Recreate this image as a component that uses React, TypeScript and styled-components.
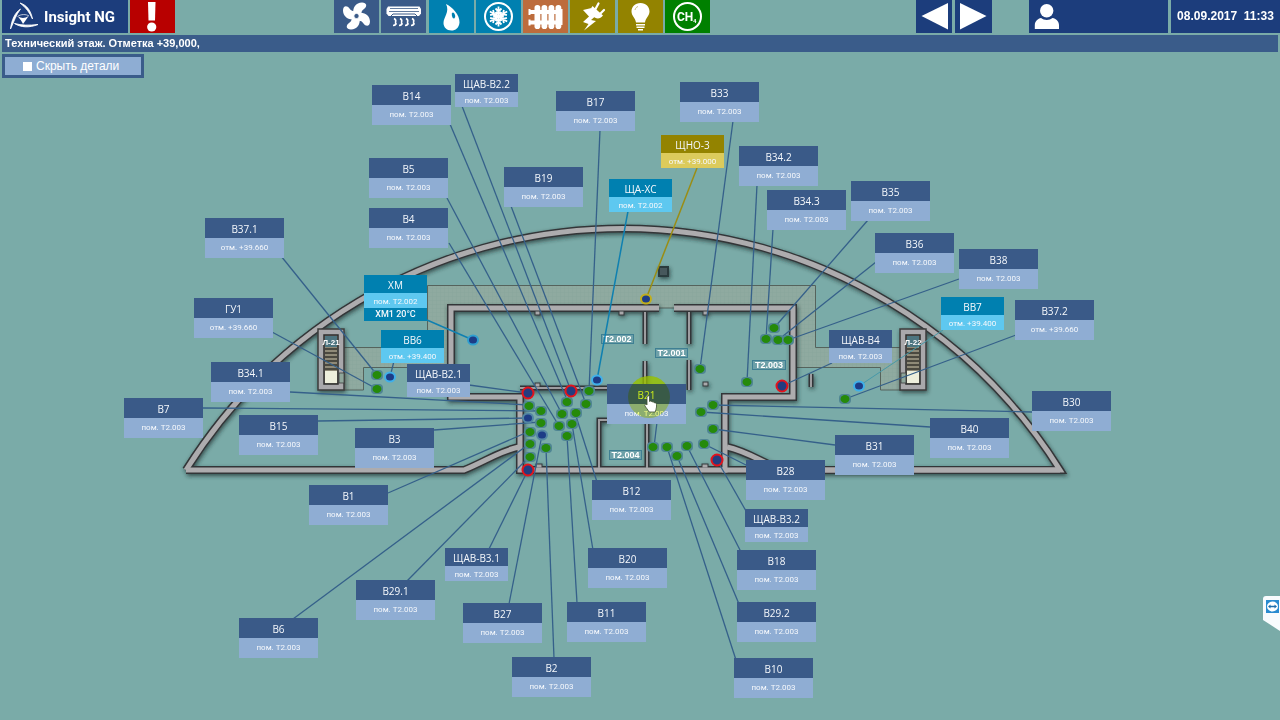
import React from "react";
import styled, { createGlobalStyle } from "styled-components";

const GlobalStyle = createGlobalStyle`
  *, *::before, *::after { box-sizing: border-box; }
  body {
    margin: 0;
    background: #7aaba8;
    font-family: "Liberation Sans", Arial, sans-serif;
    color: #fff;
  }
`;

const Screen = styled.div`
  min-height: 100vh;
  display: flex;
  flex-direction: column;
  overflow: hidden;
`;

const Header = styled.header`
  display: flex;
  height: 33px;
  margin-bottom: 2px;
  padding-left: 2px;
`;

const Brand = styled.a`
  display: flex;
  align-items: center;
  gap: 4px;
  width: 126px;
  padding-left: 7px;
  background: #1c3d7c;
  color: #fff;
  font: 700 15px Roboto, sans-serif;
  text-decoration: none;
  white-space: nowrap;
`;

const Tile = styled.button<{ $bg: string; $w?: number }>`
  display: block;
  flex: none;
  width: ${(p) => p.$w ?? 45}px;
  height: 33px;
  padding: 0;
  border: 0;
  background: ${(p) => p.$bg};
  color: #fff;
  cursor: pointer;
  svg { display: block; }
`;

const AlarmSlot = styled.div`
  margin-left: 2px;
`;

const Systems = styled.nav`
  display: grid;
  grid-template-columns: repeat(8, 45px);
  justify-content: space-between;
  width: 376px;
  margin-left: 159px;
`;

const Tools = styled.div`
  display: flex;
  gap: 3px;
  margin-left: auto;
`;

const UserPanel = styled.button`
  width: 139px;
  height: 33px;
  margin-left: 34px;
  padding: 0;
  border: 0;
  background: #1c3d7c;
  svg { display: block; }
`;

const Clock = styled.time`
  width: 109px;
  background: #1c3d7c;
  font-size: 12px;
  font-weight: 700;
  line-height: 32px;
  text-align: center;
  white-space: pre;
`;

const TitleBar = styled.h1`
  height: 17px;
  margin: 0 2px;
  padding-left: 3px;
  background: #3a5c8a;
  font-size: 11px;
  font-weight: 700;
  line-height: 17px;
`;

const Stage = styled.main`
  position: relative;
  flex: 1;
  min-height: 660px;
  overflow: hidden;
`;

const DetailToggle = styled.label`
  position: relative;
  display: inline-flex;
  align-items: center;
  gap: 4px;
  width: 142px;
  height: 24px;
  margin: 2px;
  padding-left: 18px;
  border: 3px solid #3a5c8a;
  background: #8eadd3;
  font-size: 12px;
  cursor: pointer;
  input {
    appearance: none;
    width: 9px;
    height: 9px;
    margin: 0;
    background: #fff;
  }
`;

const PlanDrawing = styled.svg`
  position: absolute;
  inset: 0;
  width: 100%;
  height: 100%;
`;

const tones = {
  blue: { head: "#3a5a88", sub: "#8fadd3" },
  cyan: { head: "#0080b0", sub: "#5ec8f0" },
  olive: { head: "#938300", sub: "#dccb5c" },
};
type Tone = keyof typeof tones;

const Card = styled.button<{ $small: boolean }>`
  position: absolute;
  display: block;
  width: ${(p) => (p.$small ? 63 : 79)}px;
  padding: 0;
  border: 0;
  background: none;
  color: #f5f8fc;
  font-family: "Open Sans", "Noto Sans", sans-serif;
  text-align: center;
  white-space: nowrap;
  cursor: pointer;
`;

const CardHead = styled.span<{ $tone: Tone; $small: boolean; $active: boolean }>`
  display: block;
  height: ${(p) => (p.$small ? 18 : 20)}px;
  background: ${(p) => tones[p.$tone].head};
  color: ${(p) => (p.$active ? "#d0ec30" : "inherit")};
  font-size: 10px;
  line-height: ${(p) => (p.$small ? 20 : 22)}px;
`;

const CardSub = styled.span<{ $tone: Tone; $small: boolean }>`
  display: block;
  height: ${(p) => (p.$small ? 15 : 20)}px;
  background: ${(p) => tones[p.$tone].sub};
  font-family: Roboto, "Noto Sans", sans-serif;
  font-size: 8px;
  line-height: ${(p) => (p.$small ? 17 : 20)}px;
`;

const CardValue = styled.span`
  display: block;
  height: 13px;
  background: #0080b0;
  font-family: Roboto, "Noto Sans", sans-serif;
  font-size: 9px;
  font-weight: 500;
  line-height: 13px;
`;

const Overlay = styled.svg`
  position: absolute;
  top: 0;
  left: 0;
  width: 100%;
  height: 100%;
  pointer-events: none;
`;

const Glow = styled(Overlay)`
  mix-blend-mode: multiply;
`;

const RemoteTab = styled.button`
  position: absolute;
  top: 544px;
  right: 0;
  width: 17px;
  height: 36px;
  padding: 0;
  border: 0;
  background: none;
  svg { display: block; }
`;

/* Drawing coordinates: x runs from the plan's left edge, y from the top of the screen. */
const HEADER = 52;
const CENTER = 640;
const ACTIVE = "В21";

type CardData = [name: string, x: number, y: number, sub?: string, tone?: Tone, small?: boolean, value?: string];
const ROOM = "пом. T2.003";
const cards: CardData[] = [
  ["В14", 372, 85],
  ["ЩАВ-В2.2", 455, 74, ROOM, "blue", true],
  ["В17", 556, 91],
  ["В33", 680, 82],
  ["В5", 369, 158],
  ["В4", 369, 208],
  ["В19", 504, 167],
  ["ЩА-ХС", 609, 179, "пом. T2.002", "cyan", true],
  ["ЩНО-3", 661, 135, "отм. +39.000", "olive", true],
  ["В34.2", 739, 146],
  ["В34.3", 767, 190],
  ["В35", 851, 181],
  ["В36", 875, 233],
  ["В38", 959, 249],
  ["ВВ7", 941, 297, "отм. +39.400", "cyan", true],
  ["В37.2", 1015, 300, "отм. +39.660"],
  ["В37.1", 205, 218, "отм. +39.660"],
  ["ГУ1", 194, 298, "отм. +39.660"],
  ["ХМ", 364, 275, "пом. T2.002", "cyan", true, "ХМ1 20°C"],
  ["ВВ6", 381, 330, "отм. +39.400", "cyan", true],
  ["ЩАВ-В2.1", 407, 364, ROOM, "blue", true],
  ["В34.1", 211, 362],
  ["В7", 124, 398],
  ["В15", 239, 415],
  ["В3", 355, 428],
  ["В1", 309, 485],
  ["ЩАВ-В3.1", 445, 548, ROOM, "blue", true],
  ["В29.1", 356, 580],
  ["В6", 239, 618],
  ["В27", 463, 603],
  ["В2", 512, 657],
  ["В11", 567, 602],
  ["В20", 588, 548],
  ["В12", 592, 480],
  ["В10", 734, 658],
  ["В29.2", 737, 602],
  ["В18", 737, 550],
  ["ЩАВ-В3.2", 745, 509, ROOM, "blue", true],
  ["В28", 746, 460],
  ["В31", 835, 435],
  ["В40", 930, 418],
  ["В30", 1032, 391],
  ["ЩАВ-В4", 829, 330, ROOM, "blue", true],
  ["В21", 607, 384],
];

const leaders: number[][] = [
  [449, 243, 559, 426], [447, 198, 562, 414], [450, 124, 568, 402], [462, 106, 571, 391],
  [511, 206, 586, 404], [600, 130, 589, 391], [733, 121, 700, 369], [757, 185, 747, 382],
  [773, 229, 766, 339], [868, 220, 774, 328], [876, 262, 778, 340], [959, 279, 788, 340],
  [832, 363, 782, 386], [1016, 335, 845, 399], [1032, 412, 713, 405], [930, 427, 701, 412],
  [835, 445, 713, 429], [748, 466, 704, 444], [746, 511, 717, 460], [741, 552, 687, 446],
  [739, 604, 677, 456], [736, 660, 667, 447], [597, 482, 575, 413], [593, 550, 572, 424],
  [577, 603, 567, 436], [554, 658, 546, 448], [509, 604, 542, 435], [489, 549, 528, 470],
  [407, 581, 529, 457], [293, 619, 529, 444], [388, 493, 530, 431], [434, 430, 541, 422],
  [318, 421, 528, 418], [203, 408, 541, 411], [290, 392, 529, 405], [469, 385, 528, 393],
  [394, 361, 390, 377], [281, 256, 377, 375], [272, 332, 377, 389], [657, 422, 654, 447],
];

const cyanLeaders: number[][] = [[427, 320, 473, 340], [628, 211, 597, 380]];

const greenDots: number[][] = [
  [377, 375], [377, 389], [529, 406], [541, 411], [541, 423], [530, 432], [530, 444], [530, 457],
  [546, 448], [589, 391], [567, 402], [586, 404], [562, 414], [576, 413], [559, 426], [572, 424],
  [567, 436], [700, 369], [747, 382], [774, 328], [766, 339], [778, 340], [788, 340], [713, 405],
  [701, 412], [713, 429], [653, 447], [667, 447], [677, 456], [687, 446], [704, 444], [845, 399],
];
const blueDots: [number, number, string, string][] = [
  [473, 340, "#2f9fd0", "#1d3c86"], [597, 380, "#3fb0ea", "#1d3c86"], [390, 377, "#3fb0ea", "#1d3c86"],
  [859, 386, "#3fb0ea", "#1d3c86"], [528, 418, "#5285a3", "#1d3c86"], [542, 435, "#5285a3", "#1d3c86"],
  [646, 299, "#c0ae1c", "#1d3c86"],
];
const redDots: number[][] = [[528, 393], [571, 391], [528, 470], [782, 386], [717, 460]];

const WALLS = [
  "M186 470 A516 516 0 0 1 1060 470 H722",
  "M186 470 H464 C486 461 500 451 519 447",
  "M1060 470 H782 C760 461 746 451 727 447",
  "M659 308 H451 V397 H520 V470 H725 V397 H793 V308 H674",
];
const THIN_WALLS = [
  "M520 388 H612", "M645 312 V344", "M645 361 V418", "M689 312 V344", "M689 360 V390",
  "M647 418 V468", "M607 420 H599 V468", "M811 374 V387",
];
const PILLARS: number[][] = [
  [535, 311, 5, 4], [619, 311, 5, 4], [703, 311, 5, 4], [535, 383, 5, 4], [536, 464, 6, 4],
  [702, 464, 6, 4], [703, 382, 5, 4],
];
const rooms: [string, number, number, number][] = [
  ["T2.002", 601, 334, 32], ["T2.001", 655, 348, 32], ["T2.003", 752, 360, 33], ["T2.004", 609, 450, 32],
];

const Staircase = ({ x, label, gap }: { x: number; label: string; gap: number }) => (
  <g>
    <rect x={x} y="329" width="26" height="61" fill="#a9a8ab" stroke="#3c3c3c" strokeWidth="1.500" />
    <rect x={x + 6} y="335" width="14" height="49" fill="#8f8a78" stroke="#2d2d2d" strokeWidth="1.500" />
    {[349, 353, 357, 361, 365, 369].map((y) => (
      <path key={y} d={`M${x + 7} ${y} h12`} stroke="#35332c" strokeWidth="1.5" />
    ))}
    <rect x={x + 7} y="336" width="12" height="11" fill="#4d7480" />
    <rect x={x + 7} y="371" width="12" height="12" fill="#eeefdc" />
    <rect x={gap} y="373" width="5" height="10" fill="#8fa69b" stroke="#3c3c3c" strokeWidth="0.8" />
    <text x={x + 13} y="345" textAnchor="middle" fontSize="8" fontWeight="700" fill="#fff">{label}</text>
  </g>
);

const FloorPlan = () => (
  <PlanDrawing>
    <defs>
      <filter id="wallShadow" x="-5%" y="-5%" width="110%" height="112%">
        <feDropShadow dx="1" dy="2" stdDeviation="2" floodColor="#1b2b2b" floodOpacity="0.700" />
      </filter>
      <pattern id="paving" width="4" height="4" patternUnits="userSpaceOnUse">
        <rect width="4" height="4" fill="#8faaa0" />
        <path d="M0 0H4M0 0V4" stroke="#87a398" strokeWidth="0.6" />
      </pattern>
    </defs>
    <svg x="50%" overflow="visible">
      <g transform={`translate(${-CENTER} ${-HEADER})`}>
        <path
          fillRule="evenodd"
          fill="url(#paving)"
          stroke="#55635c"
          d="M343.500 347.500H427.500V285.500H815.500V347.500H901V390H880.500V367.500H793V308H451V367.500H363.500V390H343.500Z"
        />
        <g fill="none" filter="url(#wallShadow)">
          {WALLS.map((d) => <path key={d} d={d} stroke="#333638" strokeWidth="8" />)}
          {THIN_WALLS.map((d) => <path key={d} d={d} stroke="#333638" strokeWidth="5" />)}
          {PILLARS.map(([x, y, w, h]) => (
            <rect key={`${x}-${y}`} x={x} y={y} width={w} height={h} fill="#a9a8ab" stroke="#333638" />
          ))}
          {WALLS.map((d) => <path key={d + "f"} d={d} stroke="#adacae" strokeWidth="5" />)}
          {THIN_WALLS.map((d) => <path key={d + "f"} d={d} stroke="#9d9da0" strokeWidth="2" />)}
          <Staircase x={318} label="Л-21" gap={339} />
          <Staircase x={900} label="Л-22" gap={901} />
          <rect x="659" y="267" width="9" height="9" fill="#46585c" stroke="#2c3a3d" strokeWidth="2" />
        </g>
        {rooms.map(([name, x, y, w]) => (
          <g key={name}>
            <rect x={x + 0.5} y={y + 0.5} width={w} height="9" fill="#6da0a8" stroke="#3f7f93" />
            <text x={x + w / 2 + 0.5} y={y + 8} textAnchor="middle" fontSize="9" fontWeight="700" fill="#fff">{name}</text>
          </g>
        ))}
        <circle cx="649" cy="397" r="21" fill="#a0c410" opacity="0.750" />
        <g stroke="#35608a" strokeWidth="1.300">
          {leaders.map(([a, b, c, d]) => <line key={`${a}-${b}`} x1={a} y1={b} x2={c} y2={d} />)}
        </g>
        <g stroke="#0f80b0" strokeWidth="1.500">
          {cyanLeaders.map(([a, b, c, d]) => <line key={`${a}-${b}`} x1={a} y1={b} x2={c} y2={d} />)}
        </g>
        <line x1="943" y1="330" x2="859" y2="386" stroke="#4699a8" />
        <line x1="697" y1="168" x2="646" y2="299" stroke="#9a8d14" strokeWidth="1.500" />
        {greenDots.map(([x, y]) => (
          <g key={`${x}-${y}`}>
            <rect x={x - 6} y={y - 5} width="12" height="10" rx="4" fill="#4f8593" />
            <ellipse cx={x} cy={y} rx="4.500" ry="4" fill="#258a0a" />
          </g>
        ))}
        {blueDots.map(([x, y, ring, fill]) => (
          <ellipse key={`${x}-${y}`} cx={x} cy={y} rx="5" ry="4.500" fill={fill} stroke={ring} strokeWidth="2" />
        ))}
        {redDots.map(([x, y]) => (
          <circle key={`${x}-${y}`} cx={x} cy={y} r="5.500" fill="#233c80" stroke="#e3131c" strokeWidth="2" />
        ))}
      </g>
    </svg>
  </PlanDrawing>
);

const FanIcon = () => (
  <svg width="45" height="33" viewBox="0 0 45 33" fill="#fff">
    {[0, 90, 180, 270].map((a) => (
      <path key={a} transform={`rotate(${a} 22.500 16)`} d="M19.500 14.500C18 8 22 2.500 28 2.500C33 2.500 33.500 6.500 30 9C27.500 10.800 27 12.500 27.500 15.500L22.500 17Z" />
    ))}
    <circle cx="22.500" cy="16" r="2.600" fill="#3a5a88" stroke="#fff" strokeWidth="0.800" />
  </svg>
);
const ConditionerIcon = () => (
  <svg width="45" height="33" viewBox="0 0 45 33" fill="none" stroke="#fff">
    <path d="M7 6.500H38.500L40 9V13.500L38 16H7.500L5.500 13.500V9Z" fill="#fff" stroke="none" />
    <path d="M9 8.500H37M8 11.500H38" stroke="#3a5a88" strokeWidth="0.800" />
    <path d="M10 16L12 14H34L36 16" stroke="#3a5a88" />
    {[13, 19, 25, 31].map((x) => (
      <path key={x} d={`M${x} 18.500C${x + 4} 20.500 ${x} 22.500 ${x + 2} 24C${x + 1} 25.500 ${x} 25.500 ${x - 1} 25.500`} strokeWidth="1.600" />
    ))}
  </svg>
);
const DropIcon = () => (
  <svg width="45" height="33" viewBox="0 0 45 33">
    <path d="M17 4C23 6.500 31 15 30.500 22.500C30 28 26.500 30.500 22.500 30.500C17.500 30.500 14.500 27 14.500 23C14.500 17 21 12 17 4Z" fill="#fff" />
    <ellipse cx="24.500" cy="15.500" rx="1.600" ry="3" transform="rotate(-15 24.500 15.500)" fill="#0080b0" />
  </svg>
);
const SnowIcon = () => (
  <svg width="45" height="33" viewBox="0 0 45 33" fill="none" stroke="#fff" strokeWidth="1.800">
    <circle cx="22.500" cy="16.500" r="13.500" strokeWidth="2" />
    {[0, 60, 120, 180, 240, 300].map((a) => (
      <path key={a} transform={`rotate(${a} 22.500 16.500)`} d="M22.500 16.500V6.500M19.500 8.500L22.500 11.500L25.500 8.500M20 12L22.500 14.500L25 12" />
    ))}
  </svg>
);
const RadiatorIcon = () => (
  <svg width="45" height="33" viewBox="0 0 45 33" fill="#fff">
    {[11.5, 18.5, 25.5, 32.5].map((x) => <rect key={x} x={x} y="5" width="5.800" height="24" rx="2.800" />)}
    <path d="M7 10H37V14H7ZM7 20.500H37V24.500H7ZM5.500 9H7.500V15H5.500ZM5.500 19.500H7.500V25.500H5.500ZM38 9H39.500V25H38Z" />
  </svg>
);
const PowerIcon = () => (
  <svg width="45" height="33" viewBox="0 0 45 33" fill="#fff">
    <path d="M22.500 6L33 15.500C30 19.500 25.500 19 23 16C20.500 13 20 9 22.500 6Z" />
    <path d="M25.500 9L28.500 3.500M30 14L34 10" stroke="#fff" strokeWidth="2.200" strokeLinecap="round" />
    <path d="M13 10L21.500 8L24.500 17L21 20L26 21L14 30.500L18.500 24L13 22L19 16.500Z" />
  </svg>
);
const BulbIcon = () => (
  <svg width="45" height="33" viewBox="0 0 45 33" fill="#fff">
    <path d="M22.500 3C28 3 31.500 7 31.500 11.500C31.500 16 27.500 18 27 22.500H18C17.500 18 13.500 16 13.500 11.500C13.500 7 17 3 22.500 3Z" />
    <path d="M18 24.800H27M18.500 27.300H26.500M20 29.800H25" stroke="#fff" strokeWidth="1.500" />
    <path d="M17 10C17.500 8 18.500 7 20 6.500" stroke="#c9c27d" fill="none" />
  </svg>
);
const MethaneIcon = () => (
  <svg width="45" height="33" viewBox="0 0 45 33">
    <circle cx="22.500" cy="16.500" r="13.500" fill="none" stroke="#fff" strokeWidth="2" />
    <text x="12" y="20.500" fontSize="12" fontWeight="700" fill="#fff" fontFamily="Roboto, sans-serif">CH</text>
    <text x="28" y="22.500" fontSize="6" fontWeight="700" fill="#fff" fontFamily="Roboto, sans-serif">4</text>
  </svg>
);

const systems: [string, string, React.FC][] = [
  ["Вентиляция", "#3a5a88", FanIcon],
  ["Кондиционирование", "#3a5a88", ConditionerIcon],
  ["Водоснабжение", "#0080b0", DropIcon],
  ["Холодоснабжение", "#0080b0", SnowIcon],
  ["Отопление", "#bd6c3c", RadiatorIcon],
  ["Электроснабжение", "#938300", PowerIcon],
  ["Освещение", "#938300", BulbIcon],
  ["Газоанализ", "#008000", MethaneIcon],
];

export default function App() {
  return (
    <Screen>
      <GlobalStyle />
      <Header>
        <Brand href="#">
          <svg width="31" height="30" viewBox="0 0 31 30" fill="#fff">
            <path d="M11 1C18 3 22 9 23.500 17C20.500 10.500 17 5.500 11 1Z" stroke="#fff" strokeWidth="0.800" />
            <path d="M11.500 7C6 10.500 2.500 18 1.500 27C5.500 18.500 7 13 11.500 7Z" stroke="#fff" strokeWidth="0.800" />
            <path d="M5.500 21.500C12 25.500 20 26 29 22.500C20 23.500 13 23.500 5.500 21.500Z" stroke="#fff" strokeWidth="0.900" />
            <path d="M9 14.500C12 16.500 16.500 16.500 19.500 14C18 16.500 16 19.500 14 22C13 19.500 11 17 9 14.500Z" />
            <path d="M8.500 14.500C12 12 17 12 20 14" stroke="#fff" fill="none" strokeWidth="0.700" />
          </svg>
          Insight NG
        </Brand>
        <AlarmSlot>
          <Tile $bg="#b80000" aria-label="Тревоги">
            <svg width="45" height="33" viewBox="0 0 45 33" fill="#fff">
              <path d="M18 2H25.500L25 20.500H18.500Z" />
              <circle cx="21.700" cy="27" r="4.600" />
            </svg>
          </Tile>
        </AlarmSlot>
        <Systems>
          {systems.map(([name, bg, Icon]) => (
            <Tile key={name} $bg={bg} aria-label={name}><Icon /></Tile>
          ))}
        </Systems>
        <Tools>
          <Tile $bg="#1c3d7c" $w={36} aria-label="Назад">
            <svg width="36" height="33" viewBox="0 0 36 33" fill="#fff"><path d="M5.500 16L32 3V29.500Z" /></svg>
          </Tile>
          <Tile $bg="#1c3d7c" $w={37} aria-label="Вперёд">
            <svg width="37" height="33" viewBox="0 0 37 33" fill="#fff"><path d="M31.500 16L5 3V29.500Z" /></svg>
          </Tile>
          <UserPanel aria-label="Пользователь">
            <svg width="36" height="33" viewBox="0 0 36 33" fill="#fff">
              <circle cx="17.700" cy="10.700" r="6.700" />
              <path d="M5.800 29V25C6 21 9 18.500 12 18C15 20.500 20.500 20.500 23.500 18C27 18.500 29.800 21 30 25V29Z" />
            </svg>
          </UserPanel>
          <Clock>{"08.09.2017  11:33"}</Clock>
        </Tools>
      </Header>
      <TitleBar>Технический этаж. Отметка +39,000,</TitleBar>
      <Stage>
        <FloorPlan />
        {cards.map(([name, x, y, sub = ROOM, tone = "blue", small = false, value]) => (
          <Card key={name} $small={small} style={{ left: `calc(50% + ${x - CENTER}px)`, top: y - HEADER }}>
            <CardHead $tone={tone} $small={small} $active={name === ACTIVE}>{name}</CardHead>
            <CardSub $tone={tone} $small={small}>{sub}</CardSub>
            {value && <CardValue>{value}</CardValue>}
          </Card>
        ))}
        <Glow aria-hidden="true">
          <svg x="50%" overflow="visible"><circle cx="9" cy="345" r="21" fill="#f4ff20" opacity="0.550" /></svg>
        </Glow>
        <Overlay aria-hidden="true">
          <svg x="50%" overflow="visible">
            <path
              transform="translate(4 343)"
              d="M3.500 1C4.500 0.500 5.500 1 5.500 2V6.500C6.500 5.800 7.500 6 8 7C9 6.500 10 7 10.200 7.800C11.200 7.300 12.500 8 12.500 9.500V12C12.500 14 11.500 15 11.200 17H5C4.500 15 1.500 12.500 0.800 10.500C0.500 9.200 2 8.800 3 10V2Z"
              fill="#fff"
              stroke="#3c4f30"
              strokeWidth="0.800"
            />
          </svg>
        </Overlay>
        <DetailToggle>
          <input type="checkbox" />
          Скрыть детали
        </DetailToggle>
        <RemoteTab aria-label="Удалённый доступ">
          <svg width="17" height="36" viewBox="0 0 17 36">
            <path d="M17 0H3Q0 0 0 3V24L17 35Z" fill="#f8fbfd" />
            <rect x="3" y="4" width="13" height="13" fill="#2a8bd0" />
            <ellipse cx="9.500" cy="10.500" rx="5.500" ry="5" fill="#fff" />
            <path d="M5 10.500L7.500 8.500V9.800H11.500V8.500L14 10.500L11.500 12.500V11.200H7.500V12.500Z" fill="#1f6fae" />
          </svg>
        </RemoteTab>
      </Stage>
    </Screen>
  );
}
